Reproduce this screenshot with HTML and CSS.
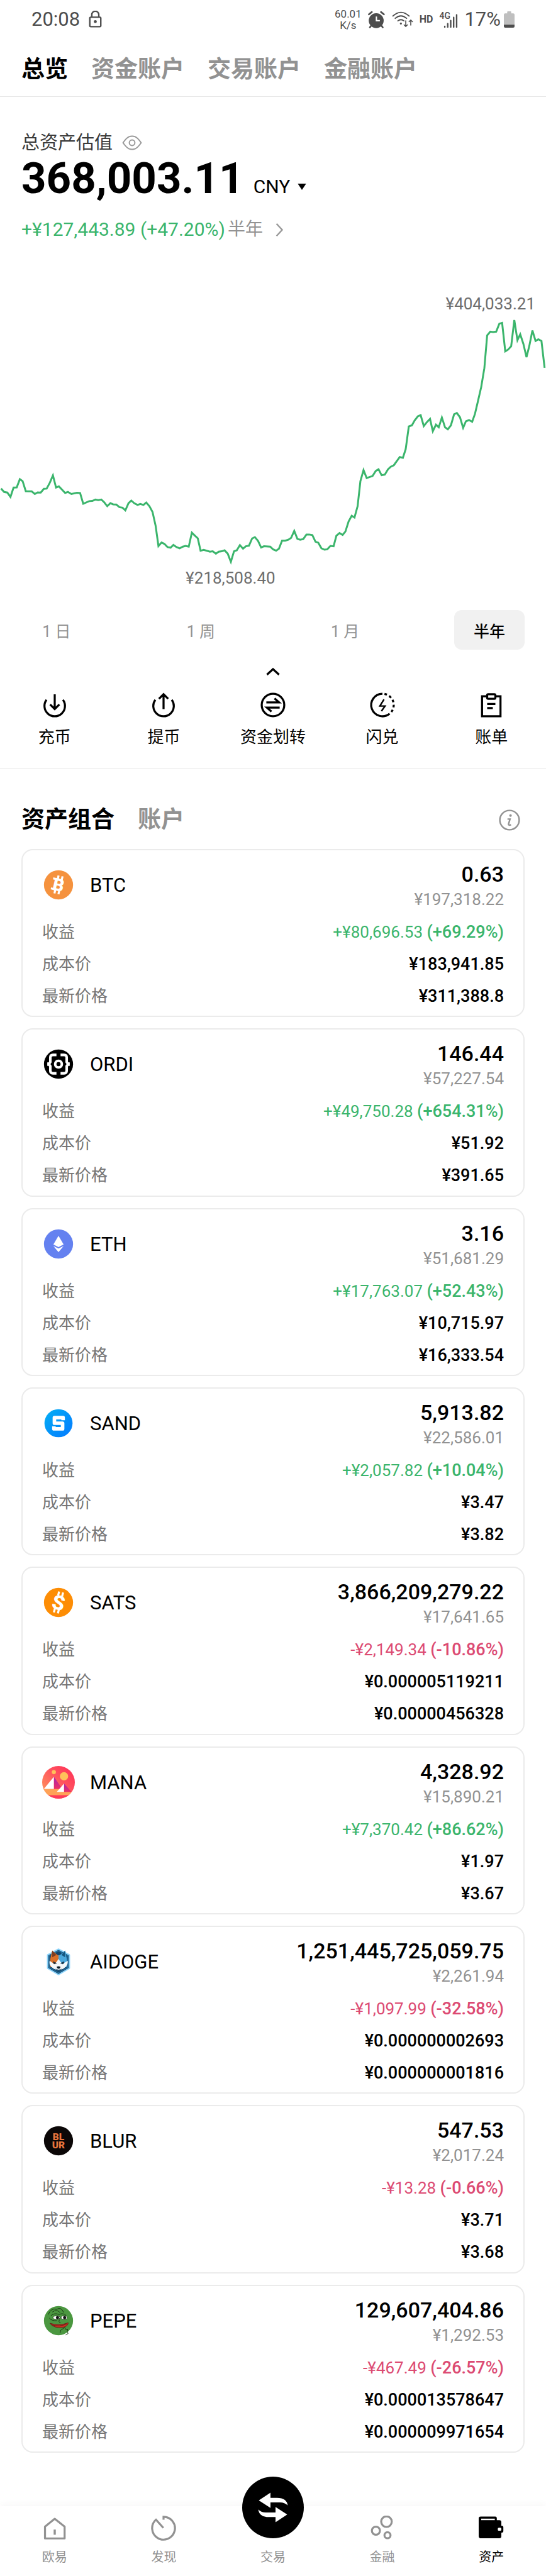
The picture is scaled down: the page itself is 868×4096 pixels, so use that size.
FILE: index.html
```html
<!DOCTYPE html>
<html lang="zh-CN">
<head>
  <meta charset="UTF-8">
  <meta name="viewport" content="width=device-width, initial-scale=1.0">
  <title>资产</title>
  <link rel="stylesheet" href="styles.css">
</head>
<body>

  <div class="status-bar">
    <span class="clock">20:08</span>
    <svg class="lock" viewBox="0 0 26 34" width="21" height="27">
      <path d="M6 14V8a7 7 0 0 1 14 0v6" fill="none" stroke="#4d4d4d" stroke-width="3"/>
      <rect x="2" y="13" width="22" height="19" rx="2" fill="none" stroke="#4d4d4d" stroke-width="3"/>
      <circle cx="13" cy="22" r="3" fill="#4d4d4d"/>
    </svg>
    <span class="net-speed">60.01<br>K/s</span>
    <svg viewBox="270 66 90 92" width="28" height="28">
      <circle cx="312" cy="118" r="39" fill="#4d4d4d"/>
      <path d="M274 85l15-12M337 73l15 12M285 145l-6 8M340 145l6 8" stroke="#4d4d4d" stroke-width="9" stroke-linecap="round"/>
      <path d="M313 96v22h18" fill="none" stroke="#fff" stroke-width="7"/>
    </svg>
    <svg viewBox="398 62 128 100" width="34" height="27">
      <g fill="none" stroke="#4d4d4d" stroke-width="7" stroke-linecap="round">
        <path d="M404 93q48-44 97 0M418 107q34-30 68 0M434 122q18-15 36 0"/>
        <path d="M481 122v32M471 146l10 10 10-10M511 148v-30M501 127l10-10 10 10" stroke-width="6"/>
      </g>
      <circle cx="452" cy="138" r="6" fill="#4d4d4d"/>
    </svg>
    <span class="hd">HD</span>
    <span class="signal">
      <small>4G</small>
      <svg viewBox="714 76 86 84" width="23" height="22">
        <path d="M721 152v4M739 136v20M757 117v39M775 98v58M793 82v74" stroke="#4d4d4d" stroke-width="9" stroke-linecap="round"/>
      </svg>
    </span>
    <span class="battery">17%
      <svg viewBox="0 0 64 98" width="17" height="26">
        <path d="M20 4q0-4 4-4h16q4 0 4 4v8h12q8 0 8 8v62H0V20q0-8 8-8h12z" fill="#bfbfbf"/>
        <path d="M0 80h64v10q0 8-8 8H8q-8 0-8-8z" fill="#4d4d4d"/>
      </svg>
    </span>
  </div>

  <nav class="account-tabs">
    <a href="#" class="active">总览</a>
    <a href="#">资金账户</a>
    <a href="#">交易账户</a>
    <a href="#">金融账户</a>
  </nav>

  <section class="overview">
    <div class="total-label">
      <span>总资产估值</span>
      <button class="icon-btn" aria-label="隐藏资产">
        <svg viewBox="-20 -15 40 30" width="32" height="24" fill="none" stroke="#999" stroke-width="2.5" stroke-linejoin="round">
          <path d="M-18 0Q-11-10-6-12Q0-14 6-12Q11-10 18 0Q11 10 6 12Q0 14-6 12Q-11 10-18 0z"/>
          <circle r="5.5"/>
        </svg>
      </button>
    </div>
    <div class="total">
      <strong>368,003.11</strong>
      <button class="currency">CNY
        <svg viewBox="0 0 16 12" width="14" height="10"><path d="M0 0h16L8 12z"/></svg>
      </button>
    </div>
    <a href="#" class="total-change">
      <span class="up">+¥127,443.89 (+47.20%)</span>
      <span>半年</span>
      <svg viewBox="0 0 16 28" width="13" height="23"><path d="M2 2l11 12L2 26" fill="none" stroke="#999" stroke-width="3"/></svg>
    </a>
  </section>

  <section class="chart">
    <div class="chart-high">¥404,033.21</div>
    <svg class="chart-line" viewBox="0 160 1568 1260" preserveAspectRatio="none">
      <polyline vector-effect="non-scaling-stroke" points="3,1029 12,1046 21,1049 30,1071 39,1024 48,1023 57,982 65,992 74,1042 91,1043 100,1056 108,1048 117,1049 126,1030 134,1029 143,1000 152,963 161,1024 169,1018 178,1034 187,1051 195,1046 205,1056 221,1050 230,1051 239,1105 256,1092 265,1091 274,1084 282,1087 291,1084 299,1097 308,1117 317,1102 325,1108 334,1109 343,1122 352,1125 360,1138 369,1102 377,1089 386,1103 395,1111 403,1106 412,1111 420,1099 429,1117 438,1146 447,1216 455,1317 464,1299 472,1306 481,1322 490,1325 498,1311 507,1322 516,1328 525,1320 533,1316 542,1320 551,1250 560,1265 568,1278 576,1340 585,1336 603,1345 611,1343 620,1355 628,1345 637,1343 645,1338 654,1355 663,1396 672,1343 680,1338 689,1312 698,1330 706,1318 715,1315 724,1279 732,1272 741,1291 750,1324 758,1318 776,1320 784,1333 793,1340 801,1330 810,1290 819,1290 828,1285 836,1276 845,1241 854,1281 862,1285 871,1282 880,1259 888,1259 897,1262 906,1295 914,1300 923,1328 932,1335 940,1333 949,1316 958,1318 966,1265 975,1252 984,1261 992,1244 1001,1194 1010,1165 1018,1174 1027,1117 1035,992 1044,936 1053,976 1070,966 1079,941 1087,932 1096,962 1105,959 1114,933 1122,920 1131,912 1148,871 1157,875 1165,832 1174,718 1183,712 1191,687 1200,667 1208,661 1217,716 1226,696 1235,680 1243,742 1252,709 1260,722 1269,673 1278,722 1286,732 1295,712 1304,657 1312,650 1321,672 1330,725 1338,692 1347,686 1356,694 1364,655 1373,588 1382,520 1391,425 1399,262 1408,243 1416,245 1425,243 1434,203 1442,199 1451,342 1459,333 1468,316 1477,185 1486,286 1494,256 1503,304 1512,371 1520,315 1529,237 1538,290 1546,281 1555,290 1564,424"/>
    </svg>
    <div class="chart-low">¥218,508.40</div>
  </section>

  <div class="periods">
    <button>1 日</button>
    <button>1 周</button>
    <button>1 月</button>
    <button class="active">半年</button>
  </div>

  <button class="collapse" aria-label="收起">
    <svg viewBox="-15 -15 30 30" width="24" height="24"><path d="M-12 6L0-5 12 6" fill="none" stroke="#000" stroke-width="4"/></svg>
  </button>

  <div class="actions">
    <a href="#">
      <svg viewBox="-27 -27 54 54"><path d="M-16-10a20 20 0 1 0 32 0M0-21V8M-9-1L0 8l9-9"/></svg>
      <span>充币</span>
    </a>
    <a href="#">
      <svg viewBox="-27 -27 54 54"><path d="M-16-10a20 20 0 1 0 32 0M0 8v-29M-9-12L0-21l9 9"/></svg>
      <span>提币</span>
    </a>
    <a href="#">
      <svg viewBox="-27 -27 54 54"><circle r="22"/><path d="M-13-5h25L3-13M13 5h-25L-3 13"/></svg>
      <span>资金划转</span>
    </a>
    <a href="#">
      <svg viewBox="-27 -27 54 54"><path d="M0-22A22 22 0 1 0 14 17"/><path d="M4-21.6A22 22 0 0 1 14 17" stroke-dasharray="5 5"/><path d="M3-11L-5 2h10L-2 12" stroke-width="3"/></svg>
      <span>闪兑</span>
    </a>
    <a href="#">
      <svg viewBox="-27 -27 54 54"><path d="M-8-17h-10v39h36v-39H8"/><rect x="-8" y="-21" width="16" height="9" rx="2"/><path d="M-8-2H8M-8 6H3"/></svg>
      <span>账单</span>
    </a>
  </div>

  <header class="portfolio-head">
    <h2><a href="#" class="active">资产组合</a></h2>
    <h2><a href="#">账户</a></h2>
    <button class="icon-btn" aria-label="说明">
      <svg viewBox="-21 -21 42 42" width="34" height="34">
        <circle r="19" fill="none" stroke="#929292" stroke-width="3"/>
        <circle cx="2" cy="-9" r="2.5" fill="#929292"/>
        <path d="M-4-2h5l-3 10q0 3 5 1" fill="none" stroke="#929292" stroke-width="3"/>
      </svg>
    </button>
  </header>

  <main class="coins">
    <article class="coin">
      <div class="coin-head">
        <svg viewBox="-32 -32 64 64">
          <circle r="28.5" fill="#f5923e"/>
          <g transform="rotate(13)">
            <text class="mark" y="12" font-size="34">B</text>
            <path d="M-4-18v7M4-18v7M-4 11v7M4 11v7M-13-10h7M-13 10h7" stroke="#fff" stroke-width="4"/>
          </g>
        </svg>
        <h3>BTC</h3>
        <div class="holding"><b>0.63</b><span>¥197,318.22</span></div>
      </div>
      <dl>
        <dt>收益</dt><dd class="up">+¥80,696.53 <b>(+69.29%)</b></dd>
        <dt>成本价</dt><dd>¥183,941.85</dd>
        <dt>最新价格</dt><dd>¥311,388.8</dd>
      </dl>
    </article>

    <article class="coin">
      <div class="coin-head">
        <svg viewBox="-32 -32 64 64">
          <circle r="28.5" fill="#000"/>
          <g fill="none" stroke="#fff" stroke-width="5">
            <path d="M-4-18h-7q-5 0-5 5v9l-2 3h-4M-22 1h4l2 3v9q0 5 5 5h7M4-18h7q5 0 5 5v9l2 3h4M22 1h-4l-2 3v9q0 5-5 5H4"/>
            <circle r="6.5"/>
          </g>
        </svg>
        <h3>ORDI</h3>
        <div class="holding"><b>146.44</b><span>¥57,227.54</span></div>
      </div>
      <dl>
        <dt>收益</dt><dd class="up">+¥49,750.28 <b>(+654.31%)</b></dd>
        <dt>成本价</dt><dd>¥51.92</dd>
        <dt>最新价格</dt><dd>¥391.65</dd>
      </dl>
    </article>

    <article class="coin">
      <div class="coin-head">
        <svg viewBox="-32 -32 64 64">
          <circle r="28.5" fill="#6481f0"/>
          <path d="M0-16L10 1 0 6-10 1zM-10 4L0 9l10-5L0 16z" fill="#fff"/>
        </svg>
        <h3>ETH</h3>
        <div class="holding"><b>3.16</b><span>¥51,681.29</span></div>
      </div>
      <dl>
        <dt>收益</dt><dd class="up">+¥17,763.07 <b>(+52.43%)</b></dd>
        <dt>成本价</dt><dd>¥10,715.97</dd>
        <dt>最新价格</dt><dd>¥16,333.54</dd>
      </dl>
    </article>

    <article class="coin">
      <div class="coin-head">
        <svg viewBox="-32 -32 64 64">
          <defs><linearGradient id="sand" x1="0" y1="0" x2="1" y2="1"><stop offset="0" stop-color="#04b0f4"/><stop offset="1" stop-color="#0479ff"/></linearGradient></defs>
          <circle r="27.5" fill="url(#sand)"/>
          <path d="M9-6v-5H-8V0H8v11H-9V6" fill="none" stroke="#fff" stroke-width="7" stroke-linejoin="round"/>
        </svg>
        <h3>SAND</h3>
        <div class="holding"><b>5,913.82</b><span>¥22,586.01</span></div>
      </div>
      <dl>
        <dt>收益</dt><dd class="up">+¥2,057.82 <b>(+10.04%)</b></dd>
        <dt>成本价</dt><dd>¥3.47</dd>
        <dt>最新价格</dt><dd>¥3.82</dd>
      </dl>
    </article>

    <article class="coin">
      <div class="coin-head">
        <svg viewBox="-32 -32 64 64">
          <circle r="28.5" fill="#fd8d05"/>
          <g transform="rotate(14)">
            <text class="mark" y="14" font-size="39">S</text>
            <path d="M-4-21v8M4-21v8M-4 13v8M4 13v8" stroke="#fff" stroke-width="4"/>
          </g>
        </svg>
        <h3>SATS</h3>
        <div class="holding"><b>3,866,209,279.22</b><span>¥17,641.65</span></div>
      </div>
      <dl>
        <dt>收益</dt><dd class="down">-¥2,149.34 <b>(-10.86%)</b></dd>
        <dt>成本价</dt><dd>¥0.000005119211</dd>
        <dt>最新价格</dt><dd>¥0.00000456328</dd>
      </dl>
    </article>

    <article class="coin">
      <div class="coin-head">
        <svg viewBox="26 41 190 190">
          <defs>
            <linearGradient id="mana" x1="0" y1="1" x2="1" y2="0"><stop offset="0" stop-color="#ffa25a"/><stop offset=".6" stop-color="#ff4f5e"/><stop offset="1" stop-color="#ff2d55"/></linearGradient>
            <linearGradient id="hill" x1="0" y1="0" x2="0" y2="1"><stop offset="0" stop-color="#a524b3"/><stop offset="1" stop-color="#ee3063"/></linearGradient>
            <clipPath id="disc"><circle cx="121" cy="136" r="95"/></clipPath>
          </defs>
          <g clip-path="url(#disc)">
            <path d="M26 41h190v190H26z" fill="url(#mana)"/>
            <path d="M26 174h108v18h82v20H26z" fill="#ffa257"/>
            <path d="M26 211h190v20H26z" fill="#ff3a5a"/>
            <path d="M94 104v70h50z" fill="url(#hill)"/>
            <path d="M94 104v70H36z" fill="#fff"/>
            <path d="M153 143v49h44z" fill="url(#hill)"/>
            <path d="M153 143v49h-42z" fill="#fff"/>
          </g>
          <circle cx="94" cy="77" r="12" fill="#ffc15a"/>
          <circle cx="153" cy="101" r="24" fill="#ffc15a"/>
        </svg>
        <h3>MANA</h3>
        <div class="holding"><b>4,328.92</b><span>¥15,890.21</span></div>
      </div>
      <dl>
        <dt>收益</dt><dd class="up">+¥7,370.42 <b>(+86.62%)</b></dd>
        <dt>成本价</dt><dd>¥1.97</dd>
        <dt>最新价格</dt><dd>¥3.67</dd>
      </dl>
    </article>

    <article class="coin">
      <div class="coin-head">
        <svg viewBox="25 25 192 192">
          <path d="M121 48l64 34v78l-64 38-64-38V82z" fill="#11456b" stroke="#8ed4fa" stroke-width="8" stroke-linejoin="round"/>
          <path d="M121 58l55 29v67l-55 33-55-33V87z" fill="none" stroke="#2879ab" stroke-width="4"/>
          <path d="M84 56l30 26 8 2v70H72V108z" fill="#d9702a"/>
          <path d="M84 56l24 26-24 14z" fill="#7d3c22"/>
          <path d="M160 56l-30 26-9 2v70h50v-44z" fill="#4ba8dc"/>
          <path d="M160 56l-22 26 22 14z" fill="#155780"/>
          <path d="M69 116q12 8 30 22l22-32 23 32q18-16 31-22 3 20-12 36-20 19-42 19t-42-19q-15-16-10-36z" fill="#f4f7f9"/>
          <path d="M90 122l19 9-15 3zM153 122l-19 9 15 3z" fill="#142a3c" stroke="#142a3c" stroke-width="3"/>
          <path d="M110 151q11-5 23 0-3 12-11 12t-12-12z" fill="#0b1823"/>
          <path d="M104 165q17 11 36 0" fill="none" stroke="#315169" stroke-width="3"/>
        </svg>
        <h3>AIDOGE</h3>
        <div class="holding"><b>1,251,445,725,059.75</b><span>¥2,261.94</span></div>
      </div>
      <dl>
        <dt>收益</dt><dd class="down">-¥1,097.99 <b>(-32.58%)</b></dd>
        <dt>成本价</dt><dd>¥0.000000002693</dd>
        <dt>最新价格</dt><dd>¥0.000000001816</dd>
      </dl>
    </article>

    <article class="coin">
      <div class="coin-head">
        <svg viewBox="-32 -32 64 64">
          <circle r="28.5" fill="#0b0707"/>
          <g class="blur-mark"><text y="-1">BL</text><text y="15">UR</text></g>
        </svg>
        <h3>BLUR</h3>
        <div class="holding"><b>547.53</b><span>¥2,017.24</span></div>
      </div>
      <dl>
        <dt>收益</dt><dd class="down">-¥13.28 <b>(-0.66%)</b></dd>
        <dt>成本价</dt><dd>¥3.71</dd>
        <dt>最新价格</dt><dd>¥3.68</dd>
      </dl>
    </article>

    <article class="coin">
      <div class="coin-head">
        <svg viewBox="-32 -32 64 64">
          <circle r="28.5" fill="#4b9740"/>
          <g fill="none" stroke="#17330f" stroke-width="1.2">
            <path d="M-20-12q6-14 16-10 9-6 14 6M-12-17q8-6 15 1M-15-10q8-6 16-2 8-4 14 2M2-2q-3 5 2 6M-18-5q5 6 15 5"/>
            <path d="M3 24q1-8 6-8l3-3 2 4 4 0-1 5 2 3-5 3"/>
          </g>
          <ellipse cx="-4" cy="-6" rx="7" ry="3.5" fill="#fff" stroke="#17330f"/>
          <ellipse cx="11" cy="-6" rx="6" ry="3.5" fill="#fff" stroke="#17330f"/>
          <circle cx="-2" cy="-6" r="3" fill="#111"/>
          <circle cx="12" cy="-6" r="3" fill="#111"/>
          <path d="M-17 5q18 6 36-1 0 6-9 9-19 3-27-8z" fill="#c92f22" stroke="#5a1a12"/>
          <path d="M-14 8q16 5 31-2" fill="none" stroke="#5a1a12"/>
        </svg>
        <h3>PEPE</h3>
        <div class="holding"><b>129,607,404.86</b><span>¥1,292.53</span></div>
      </div>
      <dl>
        <dt>收益</dt><dd class="down">-¥467.49 <b>(-26.57%)</b></dd>
        <dt>成本价</dt><dd>¥0.000013578647</dd>
        <dt>最新价格</dt><dd>¥0.000009971654</dd>
      </dl>
    </article>
  </main>

  <nav class="bottom-nav">
    <a href="#">
      <svg viewBox="247 287 150 150" fill="none" stroke="#929292" stroke-width="12" stroke-linejoin="round">
        <path d="M264 353l58-47 59 47v70H264z"/><path d="M322 370v31" stroke-width="13"/>
      </svg>
      <span>欧易</span>
    </a>
    <a href="#">
      <svg viewBox="895 287 150 150" fill="none" stroke="#929292" stroke-width="12">
        <path d="M970 311V294A68 68 0 1 1 925 311L969 360"/>
      </svg>
      <span>发现</span>
    </a>
    <a href="#">
      <i class="trade-btn">
        <svg viewBox="-31 -31 62 62" width="50" height="50" fill="#fff">
          <path d="M-28-14L-5-29v10H8Q27-19 29-4 23-10 14-10H-5V1z"/>
          <path d="M28 14L5 29V19H-8Q-27 19-29 4-23 10-14 10H5V-1z"/>
        </svg>
      </i>
      <span>交易</span>
    </a>
    <a href="#">
      <svg viewBox="732 4977 50 50" fill="none" stroke="#929292" stroke-width="4">
        <circle cx="765" cy="4989" r="10.5"/><circle cx="744" cy="5007" r="8"/><circle cx="767" cy="5016" r="6"/>
      </svg>
      <span>金融</span>
    </a>
    <a href="#" class="active">
      <svg viewBox="0 0 50 50">
        <path d="M4 2h29q3 0 3 3v4h5q4 0 4 4v7q4 0 4 3v8q0 3-4 3v7q0 4-4 4H4q-4 0-4-4V6q0-4 4-4z"/>
        <path d="M5 6h27v3H5z" fill="#fff"/>
        <rect x="38" y="24" width="7" height="6" rx="2" fill="#fff"/>
      </svg>
      <span>资产</span>
    </a>
  </nav>

</body>
</html>
```

FILE: styles.css
```css
* {
  box-sizing: border-box;
}

body {
  margin: 0;
  min-height: 100vh;
  display: flex;
  flex-direction: column;
  background: #fff;
  color: #000;
  font-family: Roboto, "Noto Sans CJK SC", sans-serif;
  font-size: 26px;
}

a {
  color: inherit;
  text-decoration: none;
}

button {
  font: inherit;
  color: inherit;
  background: none;
  border: none;
  padding: 0;
  cursor: pointer;
}

svg {
  display: block;
  flex: none;
}

.icon-btn {
  display: flex;
}

.up {
  color: #3bb56c;
}

.down {
  color: #dc4a72;
}

/* status bar */
.status-bar {
  display: flex;
  align-items: center;
  gap: 10px;
  height: 61px;
  padding: 0 50px;
  color: #4d4d4d;
}

.clock,
.battery {
  font-size: 31px;
}

.lock {
  margin: 0 auto 0 4px;
}

.net-speed {
  font-size: 17px;
  line-height: 18px;
  text-align: center;
}

.hd {
  font-size: 16px;
  font-weight: 700;
}

.signal {
  position: relative;
  display: flex;
  justify-content: flex-end;
  align-items: flex-end;
  width: 30px;
  height: 26px;
}

.signal small {
  position: absolute;
  left: 0;
  top: 0;
  font-size: 14px;
  line-height: 14px;
  font-weight: 500;
}

.battery {
  display: flex;
  align-items: center;
  gap: 5px;
}

/* account tabs */
.account-tabs {
  display: flex;
  align-items: center;
  gap: 37px;
  height: 93px;
  padding: 0 34px;
  border-bottom: 1px solid #e8e8e8;
  font-size: 37px;
  font-weight: 600;
  color: #929292;
}

.account-tabs .active,
.portfolio-head .active {
  color: #000;
  font-weight: 700;
}

/* overview */
.overview {
  padding: 53px 34px 0;
}

.total-label {
  display: flex;
  align-items: center;
  gap: 15px;
  font-size: 29px;
  line-height: 40px;
  color: #3a3a3a;
}

.total {
  display: flex;
  align-items: baseline;
  gap: 15px;
  line-height: 74px;
}

.total strong {
  font-size: 69px;
}

.currency {
  display: flex;
  align-items: center;
  gap: 12px;
  font-size: 30px;
  line-height: 30px;
}

.total-change {
  display: flex;
  align-items: center;
  gap: 4px;
  margin-top: 24px;
  font-size: 28px;
  line-height: 40px;
  color: #929292;
}

.total-change .up {
  font-size: 30px;
}

.total-change svg {
  margin-left: 16px;
}

/* chart */
.chart {
  margin-top: 80px;
  font-size: 26px;
  line-height: 36px;
  color: #6e6e6e;
}

.chart-high {
  text-align: right;
  padding-right: 17px;
}

.chart-line {
  width: 100%;
  height: 400px;
}

.chart-line polyline {
  fill: none;
  stroke: #3bb56c;
  stroke-width: 3px;
}

.chart-low {
  padding-left: 34%;
}

/* period buttons */
.periods {
  display: flex;
  justify-content: space-between;
  margin-top: 33px;
  padding: 0 34px;
  font-size: 25px;
  color: #929292;
}

.periods button {
  width: 112px;
  height: 63px;
  border-radius: 12px;
}

.periods .active {
  background: #f1f1f1;
  color: #000;
  font-weight: 500;
}

.collapse {
  align-self: center;
  margin-top: 23px;
}

/* quick actions */
.actions {
  display: grid;
  grid-template-columns: repeat(5, 1fr);
  margin-top: 19px;
  padding-bottom: 32px;
  border-bottom: 1px solid #e8e8e8;
  line-height: 34px;
}

.actions a {
  display: flex;
  flex-direction: column;
  align-items: center;
  gap: 12px;
}

.actions svg {
  width: 44px;
  height: 44px;
  fill: none;
  stroke: #000;
  stroke-width: 4;
}

/* portfolio */
.portfolio-head {
  display: flex;
  align-items: center;
  gap: 37px;
  margin: 58px 41px 22px 34px;
  color: #929292;
}

.portfolio-head h2 {
  margin: 0;
  font-size: 37px;
  line-height: 48px;
  font-weight: 600;
}

.portfolio-head .icon-btn {
  margin-left: auto;
}

.coins {
  flex: 1;
  display: grid;
  grid-auto-rows: 1fr;
  gap: 18px;
  padding: 0 34px;
}

.coin {
  border: 2px solid #ebebeb;
  border-radius: 18px;
  padding: 18px 31px 3px;
}

.coin-head {
  display: flex;
  align-items: flex-start;
  line-height: 40px;
}

.coin-head svg {
  width: 52px;
  height: 52px;
  margin: 11px 24px 0 0;
}

.coin h3 {
  margin: 18px 0 0;
  font-size: 31px;
  font-weight: 400;
}

.mark,
.blur-mark {
  fill: #fff;
  font-weight: 900;
  text-anchor: middle;
}

.blur-mark {
  fill: #e8743b;
  font-size: 19px;
}

.holding {
  display: flex;
  flex-direction: column;
  align-items: flex-end;
  margin-left: auto;
  color: #929292;
}

.holding b {
  color: #000;
  font-size: 34px;
  font-weight: 500;
}

.coin dl {
  display: grid;
  grid-template-columns: auto 1fr;
  margin: 7px 0 0;
  line-height: 51px;
}

.coin dt {
  color: #757575;
}

.coin dd {
  margin: 0;
  font-size: 27px;
  font-weight: 500;
  text-align: right;
}

.coin .up,
.coin .down {
  font-size: 26px;
  font-weight: 400;
}

.coin dd b {
  font-size: 27px;
  font-weight: 500;
}

/* bottom nav */
.bottom-nav {
  display: grid;
  grid-template-columns: repeat(5, 1fr);
  align-items: end;
  flex: none;
  height: 111px;
  margin-top: 85px;
  padding-bottom: 16px;
  box-shadow: 0 -4px 10px rgba(0, 0, 0, 0.03);
  font-size: 20px;
  line-height: 28px;
  color: #929292;
}

.bottom-nav a {
  display: flex;
  flex-direction: column;
  align-items: center;
  gap: 12px;
}

.bottom-nav a > svg {
  width: 40px;
  height: 40px;
}

.bottom-nav .active {
  color: #000;
}

/* round button rises above the bar */
.trade-btn {
  display: grid;
  place-items: center;
  width: 98px;
  height: 98px;
  margin: -47px 0 4px;
  border-radius: 50%;
  background: #000;
}
```
